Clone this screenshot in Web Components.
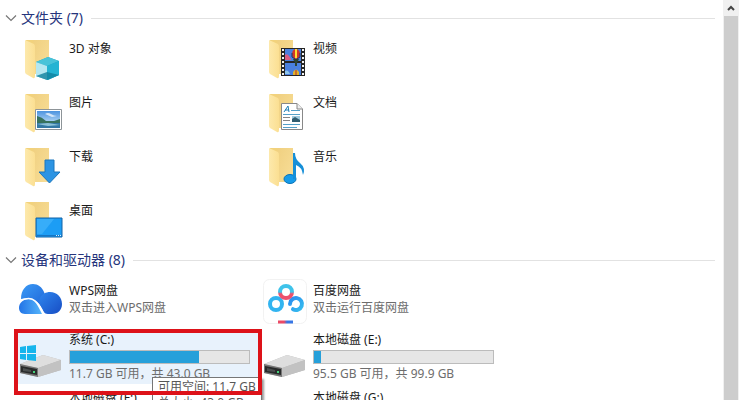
<!DOCTYPE html>
<html lang="zh-CN">
<head>
<meta charset="utf-8">
<meta name="viewport" content="width=device-width, initial-scale=1">
<title>此电脑</title>
<style>
    body {
        margin: 0;
        height: 100vh;
        overflow: hidden;
        background: #fff;
        color: #1a1a1a;
        font: 12px/17px "Noto Sans", "Noto Sans CJK SC", sans-serif;
    }
</style>
</head>
<body>

<explorer-window>
    <item-group label="文件夹" count="7">
        <file-tile><file-icon slot="icon" kind="cube"></file-icon>3D 对象</file-tile>
        <file-tile><file-icon slot="icon" kind="video"></file-icon>视频</file-tile>
        <file-tile><file-icon slot="icon" kind="picture"></file-icon>图片</file-tile>
        <file-tile><file-icon slot="icon" kind="document"></file-icon>文档</file-tile>
        <file-tile><file-icon slot="icon" kind="download"></file-icon>下载</file-tile>
        <file-tile><file-icon slot="icon" kind="music"></file-icon>音乐</file-tile>
        <file-tile><file-icon slot="icon" kind="desktop"></file-icon>桌面</file-tile>
    </item-group>
    <item-group label="设备和驱动器" count="8">
        <file-tile compact>
            <file-icon slot="icon" kind="wps"></file-icon>WPS网盘
            <span slot="detail">双击进入WPS网盘</span>
        </file-tile>
        <file-tile compact>
            <file-icon slot="icon" kind="baidu"></file-icon>百度网盘
            <span slot="detail">双击运行百度网盘</span>
        </file-tile>
        <drive-tile name="系统 (C:)" used="72" detail="11.7 GB 可用，共 43.0 GB" kind="system" selected>
            <tool-tip>可用空间: 11.7 GB<br>总大小: 43.0 GB</tool-tip>
        </drive-tile>
        <drive-tile name="本地磁盘 (E:)" used="4" detail="95.5 GB 可用，共 99.9 GB" kind="drive"></drive-tile>
        <drive-tile name="本地磁盘 (F:)" kind="drive"></drive-tile>
        <drive-tile name="本地磁盘 (G:)" kind="drive"></drive-tile>
    </item-group>
</explorer-window>

<template id="explorer-window">
    <style>
        :host {
            display: flex;
            height: 100%;
        }
        main {
            flex: 1;
            min-width: 0;
            padding: 9px 8px 0 4px;
            overflow: hidden;
        }
    </style>
    <main><slot></slot></main>
    <scroll-bar></scroll-bar>
</template>

<template id="scroll-bar">
    <style>
        :host {
            display: flex;
            flex-direction: column;
            width: 16px;
            background: #f0f0f0;
        }
        button {
            display: flex;
            justify-content: center;
            align-items: center;
            height: 16px;
            padding: 0;
            border: 0;
            background: none;
        }
        .thumb {
            flex: 1;
            margin: 0 1px;
            background: #cdcdcd;
        }
    </style>
    <button aria-label="向上滚动">
        <svg width="10" height="8" viewBox="0 0 10 8"><path d="M2 6 5 3 8 6" fill="none" stroke="#444" stroke-width="2"/></svg>
    </button>
    <div class="thumb"></div>
</template>

<template id="item-group">
    <style>
        :host {
            display: block;
        }
        h2 {
            display: flex;
            align-items: center;
            gap: 8px;
            height: 18px;
            margin: 0 0 8px;
            font-size: 14px;
            font-weight: normal;
            line-height: 18px;
        }
        h2::after {
            content: '';
            flex: 1;
            height: 1px;
            background: #e2e2e2;
        }
        button {
            display: flex;
            align-items: center;
            gap: 4px;
            padding: 0;
            border: 0;
            background: none;
            color: #26357c;
            font: inherit;
        }
        .items {
            display: grid;
            grid-template-columns: repeat(auto-fill, 244px);
            margin-left: 14px;
        }
        .items[hidden] {
            display: none;
        }
    </style>
    <h2><button aria-expanded="true">
        <svg width="13" height="10" viewBox="0 0 13 10"><path d="M2 2.500 7 7.500 12 2.500" fill="none" stroke="#777" stroke-width="1.200"/></svg>
        <span></span>
    </button></h2>
    <div class="items"><slot></slot></div>
</template>

<template id="file-tile">
    <style>
        :host {
            display: flex;
            align-items: center;
            gap: 3px;
            height: 54px;
        }
        :host([compact]) {
            height: 49px;
        }
        .text {
            align-self: flex-start;
            padding-top: 5px;
        }
        ::slotted([slot="detail"]) {
            display: block;
            color: #6d6d6d;
        }
    </style>
    <slot name="icon"></slot>
    <div class="text"><slot></slot><slot name="detail"></slot></div>
</template>

<template id="drive-tile">
    <style>
        :host {
            display: flex;
            align-items: center;
            gap: 3px;
            position: relative;
            height: 58px;
        }
        :host([selected]) {
            background: linear-gradient(#e8f2fc, #e8f2fc) 0 6px / 240px 100% no-repeat;
        }
        /* marker frame round the selected drive, drawn over its tooltip */
        :host([selected])::after {
            content: '';
            position: absolute;
            inset: 3px 0 -11px -4px;
            z-index: 2;
            border: 4px solid #dd1219;
            pointer-events: none;
        }
        .text {
            flex: 1;
            align-self: flex-start;
            padding: 5px 12px 0 0;
        }
        label {
            display: block;
        }
        progress {
            appearance: none;
            -webkit-appearance: none;
            display: block;
            box-sizing: border-box;
            width: 100%;
            height: 14px;
            margin: 2px 0 1px;
            border: 1px solid #bcbcbc;
            background: #e6e6e6;
        }
        progress::-webkit-progress-bar {
            background: #e6e6e6;
        }
        progress::-webkit-progress-value {
            background: #26a0da;
        }
        .detail {
            color: #6d6d6d;
        }
        ::slotted(tool-tip) {
            position: absolute;
            z-index: 1;
            top: 51px;
            left: 134px;
        }
    </style>
    <file-icon></file-icon>
    <div class="text">
        <label for="usage"></label>
        <progress id="usage" max="100"></progress>
        <div class="detail"></div>
    </div>
    <slot></slot>
</template>

<template id="tool-tip">
    <style>
        :host {
            display: block;
            box-sizing: border-box;
            padding: 1px 5px;
            border: 1px solid #767676;
            background: #fff;
            box-shadow: 2px 2px 2px rgba(0, 0, 0, .4);
            color: #575757;
            line-height: 16px;
            white-space: nowrap;
        }
    </style>
    <slot></slot>
</template>

<script>
const FOLDER = `
    <path d="M8 2H31V36H8Z" fill="#f2d27c"/>
    <path d="M15 2H31V36H17Z" fill="url(#back)"/>
    <path d="M7 2 16 6Q17 7 17 9V38Q17 41 15 40L8 36Q7 35 7 34Z" fill="url(#flap)"/>
    <defs>
        <linearGradient id="back" x2="1" y2="1"><stop stop-color="#f0d080"/><stop offset="1" stop-color="#f8de98"/></linearGradient>
        <linearGradient id="flap" x2="1"><stop stop-color="#fde9ac"/><stop offset="1" stop-color="#fbdf92"/></linearGradient>
    </defs>`;

const DRIVE = `
    <path d="M2 33 25 24 43 29V39L20 46 2 42Z" fill="#b9b9b9"/>
    <path d="M2 33 25 24 43 29 20 37Z" fill="#dedede"/>
    <path d="M20 37 43 29V39L20 46Z" fill="#c2c2c2"/>
    <path d="M2 33 20 37V46L2 42Z" fill="#777"/>
    <path d="M3 35 19 38V44L3 41Z" fill="#292b2b"/>
    <path d="M5 37 13 39V41L5 40Z" fill="#4c5050"/>
    <path d="M15 40H17V42H15Z" fill="#45d07a"/>`;

const ICONS = {
    cube: FOLDER + `
        <path d="M18 24 30 19 41 23V37L30 42 18 38Z" fill="#1f9fbd"/>
        <path d="M18 24 30 19 41 23 29 28Z" fill="#48c3d9"/>
        <path d="M18 24 29 28V42L18 38Z" fill="#b5e7f1"/>
        <path d="M29 28 41 23V37L29 42Z" fill="#24b4d3"/>
        <path d="M18 38 29 34 41 37 29 42Z" fill="#10819d" opacity=".8"/>`,
    picture: FOLDER + `
        <defs><linearGradient id="sky" x2="0" y2="1"><stop stop-color="#4c93df"/><stop offset="1" stop-color="#dff3fd"/></linearGradient></defs>
        <path d="M17.500 17.500H43.500V37.500H17.500Z" fill="#fff" stroke="#8d9498"/>
        <path d="M19 19H42V36H19Z" fill="url(#sky)"/>
        <path d="M27 22Q30 20 33 22T39 24L34 25Z" fill="#fff" opacity=".7"/>
        <path d="M19 24Q24 25 28 29L36 29 42 27V32H19Z" fill="#37725e"/>
        <path d="M19 31H42V36H19Z" fill="#3378a4"/>
        <path d="M19 32 30 31 42 33 30 34Z" fill="#8cc1d6"/>`,
    download: FOLDER + `
        <path d="M27 14H36V26H42L31.500 37 21 26H27Z" fill="#2c94e3" stroke="#1a76be"/>`,
    desktop: FOLDER + `
        <path d="M18 18H44V37H18Z" fill="#1c9df5" stroke="#1262a5"/>
        <path d="M19 19H36L24 34H19Z" fill="#43b4fb" opacity=".7"/>
        <path d="M19 35.500H44" stroke="#1675c4"/>
        <path d="M38 35.500H43" stroke="#d8f1ff" stroke-dasharray="1 1"/>`,
    video: FOLDER + `
        <path d="M19 10H43V38H19Z" fill="#252525"/>
        <path d="M21 11V38M41 11V38" stroke="#f2f2f2" stroke-width="2" stroke-dasharray="2 2"/>
        <path d="M23 11H39V23H23Z" fill="#4a80df"/><path d="M23 25H39V37H23Z" fill="#4a80df"/>
        <path d="M23 17Q25 15 27 18T29 22H23Z" fill="#d85c82"/>
        <path d="M23 33Q26 31 28 36H23Z" fill="#8fc5ea"/>
        <ellipse cx="34" cy="16" rx="4" ry="5" fill="#d23729"/>
        <path d="M33 11H35V20H33Z" fill="#ffe032"/><path d="M30 15V19L33 21M38 15V19L35 21" fill="none" stroke="#28345a"/>
        <path d="M31 21H37L35 25V28H33V25Z" fill="#2c4434"/>
        <path d="M31 37V34Q34 29 37 34V37Z" fill="#e3b42b"/><path d="M34 32V37" stroke="#b52b2b"/>`,
    document: FOLDER + `
        <path d="M19.500 11.500H35L40.500 17V37.500H19.500Z" fill="#fff" stroke="#888"/>
        <path d="M35 11.500V17H40.500" fill="#eee" stroke="#888"/>
        <path d="M22 20 26 14 27 20M23 18H27" fill="none" stroke="#1c7eb5"/>
        <path d="M29 18.500H38M21 22.500H38M21 32.500H38M21 35.500H35" stroke="#54a0c8"/>
        <path d="M21 25.500H28M21 28.500H28" stroke="#858585"/>
        <path d="M30 24H38V30H30Z" fill="#a0cbdf"/><path d="M30 27 33 25 38 28V30H30Z" fill="#315d70"/>`,
    music: FOLDER + `
        <ellipse cx="28" cy="33" rx="6" ry="4.500" fill="#169bea" stroke="#0873b8"/>
        <path d="M31 7H33Q33 13 38 17Q44 22 41 29Q40 21 34 19V33H31Z" fill="#168fd8"/>`,
    wps: `
        <defs>
            <linearGradient id="cloud" x2="1" y2="1"><stop stop-color="#3b9bf6"/><stop offset="1" stop-color="#1655cf"/></linearGradient>
            <linearGradient id="lobe" x2="1" y2="1"><stop stop-color="#2f86ee"/><stop offset="1" stop-color="#174dc4"/></linearGradient>
            <linearGradient id="hill" x2="1"><stop stop-color="#2273e6"/><stop offset="1" stop-color="#56b6fb"/></linearGradient>
        </defs>
        <path d="M3 21C3 12 8 6 15 6C20 6 24 9 26 14L34 34C31 36 28 36 26 33C21 23 13 18 3 21Z" fill="url(#cloud)"/>
        <path d="M22 20C24 16 28 14 32 14C39 14 44 19 44 26C44 32 40 36 34 36H30C26 36 25 33 23 29C21 26 21 23 22 20Z" fill="url(#lobe)"/>
        <path d="M1 30C1 25 5 21 11 21C17 21 20 28 24 36H7C3 36 1 33 1 30Z" fill="url(#hill)"/>
        <path d="M2 23C15 16 21 25 26 36" fill="none" stroke="#fff" stroke-width="1.500"/>`,
    baidu: `
        <defs>
            <linearGradient id="ring" x2="1" y2="1"><stop stop-color="#2b8df0"/><stop offset="1" stop-color="#35bdee"/></linearGradient>
            <linearGradient id="top" x2="0" y2="1"><stop offset=".5" stop-color="#3fc3ea"/><stop offset=".65" stop-color="#ed506d"/></linearGradient>
            <linearGradient id="line" gradientUnits="userSpaceOnUse" x1="16" x2="31"><stop offset=".4" stop-color="#ec4965"/><stop offset=".6" stop-color="#3776e5"/></linearGradient>
        </defs>
        <rect x="1.500" y="1.500" width="43" height="44" rx="6" fill="#fff" stroke="#f2f2f2"/>
        <g fill="none" stroke-width="4">
            <circle cx="14" cy="26" r="6" stroke="#32b4f0"/>
            <path d="M28 26A6 6 0 1 1 31 31.200" stroke="url(#ring)" stroke-linecap="round"/>
            <circle cx="24" cy="14" r="6" stroke="url(#top)"/>
        </g>
        <path d="M16 44H31" stroke="url(#line)" stroke-width="3"/>`,
    drive: DRIVE,
    system: DRIVE + `
        <path d="M2 16 8 15V22H2ZM9 15 18 14V22H9ZM2 23H8V29L2 28ZM9 23H18V30L9 29Z" fill="#16b5ec"/>`
};

function attach(element, id) {
    element.attachShadow({mode: 'open'});
    element.shadowRoot.appendChild(document.getElementById(id).content.cloneNode(true));
}

class FileIcon extends HTMLElement {

    constructor() {
        super();
        this.attachShadow({mode: 'open'});
    }

    connectedCallback() {
        this.shadowRoot.innerHTML = `
            <style>
                :host { display: block; flex: none; width: 48px; height: 48px; }
                svg { display: block; }
            </style>
            <svg width="48" height="48" viewBox="0 0 48 48" aria-hidden="true">${ICONS[this.getAttribute('kind')]}</svg>
        `;
    }
}

class ScrollBar extends HTMLElement {
    constructor() {
        super();
        attach(this, 'scroll-bar');
    }
}

class ExplorerWindow extends HTMLElement {
    constructor() {
        super();
        attach(this, 'explorer-window');
    }
}

class ItemGroup extends HTMLElement {

    constructor() {
        super();
        attach(this, 'item-group');

        this.button = this.shadowRoot.querySelector('button');
        this.items = this.shadowRoot.querySelector('.items');

        this.button.addEventListener('click', () => {
            this.items.hidden = !this.items.hidden;
            this.button.setAttribute('aria-expanded', !this.items.hidden);
        });
    }

    connectedCallback() {
        this.button.querySelector('span').textContent = `${this.getAttribute('label')} (${this.getAttribute('count')})`;
    }
}

class FileTile extends HTMLElement {
    constructor() {
        super();
        attach(this, 'file-tile');
    }
}

class DriveTile extends HTMLElement {

    constructor() {
        super();
        attach(this, 'drive-tile');
    }

    connectedCallback() {
        const root = this.shadowRoot;
        root.querySelector('file-icon').setAttribute('kind', this.getAttribute('kind'));
        root.querySelector('label').textContent = this.getAttribute('name');
        root.querySelector('progress').value = Number(this.getAttribute('used'));
        root.querySelector('.detail').textContent = this.getAttribute('detail');
    }
}

class ToolTip extends HTMLElement {
    constructor() {
        super();
        attach(this, 'tool-tip');
    }
}

window.customElements.define('scroll-bar', ScrollBar);
window.customElements.define('explorer-window', ExplorerWindow);
window.customElements.define('item-group', ItemGroup);
window.customElements.define('file-tile', FileTile);
window.customElements.define('drive-tile', DriveTile);
window.customElements.define('tool-tip', ToolTip);
// last, so that tiles have set the kind before the icon is drawn
window.customElements.define('file-icon', FileIcon);
</script>
</body>
</html>
